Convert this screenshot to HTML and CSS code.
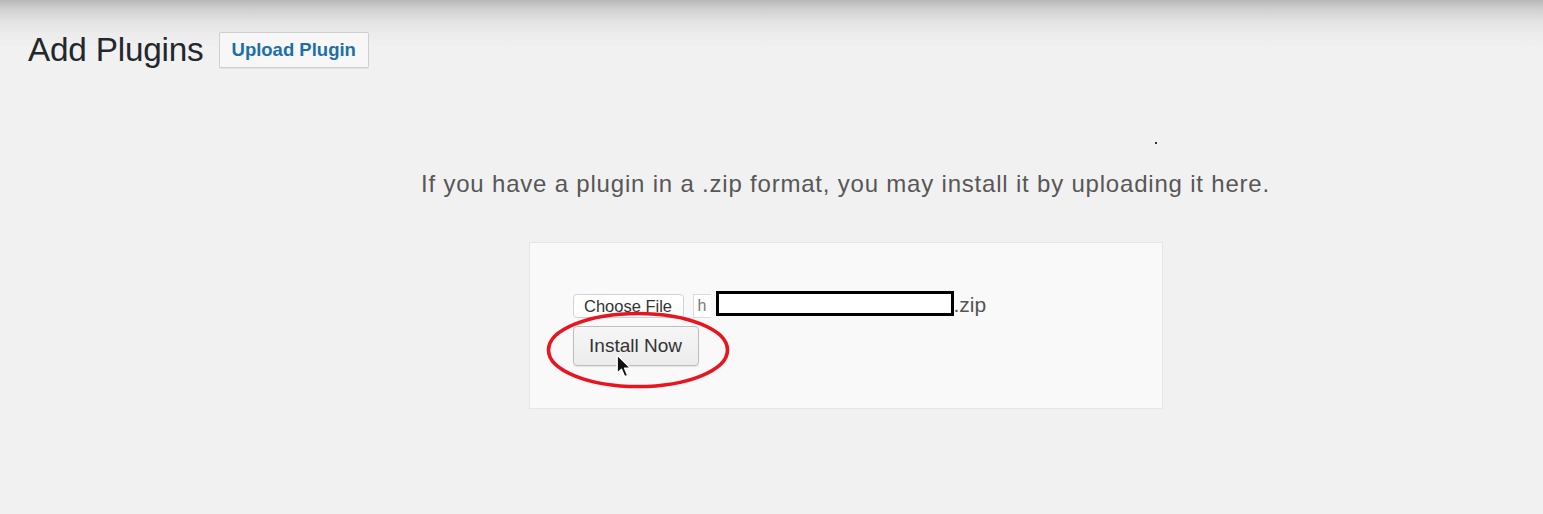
FILE: index.html
```html
<!DOCTYPE html>
<html lang="en">
<head>
<meta charset="utf-8">
<title>Add Plugins</title>
<link rel="stylesheet" href="styles.css">
</head>
<body>
<div class="page">
  <header class="head">
    <h1 class="title">Add Plugins</h1>
    <button class="upload-btn">Upload Plugin</button>
  </header>
  <div class="upload-wrap">
    <p class="install-help">If you have a plugin in a .zip format, you may install it by uploading it here.</p>
    <div class="upload-box">
      <div class="file-row">
        <span class="choose-btn">Choose File</span>
        <span class="file-stub">h</span>
        <span class="redact"></span>
        <span class="ext">.zip</span>
      </div>
      <button class="install-btn">Install Now</button>
      <svg class="circle" width="186" height="80" viewBox="0 0 186 80"><ellipse cx="92" cy="39" rx="89.5" ry="36.5" fill="none" stroke="#e8141f" stroke-width="3.6"/></svg>
      <svg class="cursor" width="16" height="25" viewBox="0 0 14 22"><path d="M1 1 L1 17 L4.8 13.4 L7.6 20 L10.2 18.9 L7.5 12.5 L12.6 12.3 Z" fill="#111" stroke="#fff" stroke-width="1.2" stroke-linejoin="round"/></svg>
    </div>
  </div>
  <span class="speck"></span>
</div>
</body>
</html>
```
FILE: styles.css
```css
html, body {
  margin: 0;
  padding: 0;
}
body {
  background: #f1f1f1 linear-gradient(to bottom, #b8b8b8 0px, #d2d2d2 10px, #e3e3e3 22px, #ececec 34px, #f1f1f1 48px) no-repeat;
  background-size: 100% 60px;
  height: 514px;
  overflow: hidden;
  font-family: "Liberation Sans", Arial, Helvetica, sans-serif;
}
.page {
  position: relative;
  height: 514px;
}
.head {
  display: flex;
  align-items: center;
  gap: 15px;
  padding: 31px 0 0 28px;
}
.title {
  margin: 0;
  font-size: 33.3px;
  font-weight: 400;
  color: #23282d;
  letter-spacing: -0.2px;
}
.upload-btn {
  height: 36px;
  padding: 0 12px;
  background: #f7f7f7;
  border: 1px solid #cfcfcf;
  border-radius: 2px;
  font-family: "Liberation Sans", Arial, sans-serif;
  font-size: 18.5px;
  font-weight: 700;
  color: #1e6fa8;
  box-shadow: 0 1px 0 #e2e2e2;
}
.upload-wrap {
  display: flex;
  flex-direction: column;
  align-items: center;
  padding-left: 148px;
}
.install-help {
  margin: 100px 0 43px;
  font-size: 24px;
  line-height: 30px;
  letter-spacing: 0.8px;
  color: #575757;
}
.upload-box {
  position: relative;
  box-sizing: border-box;
  width: 634px;
  height: 167px;
  padding: 48px 0 0 43px;
  background: #f9f9f9;
  border: 1px solid #e6e6e6;
}
.file-row {
  display: flex;
  align-items: center;
  height: 25px;
}
.choose-btn {
  box-sizing: border-box;
  display: flex;
  align-items: center;
  justify-content: center;
  width: 111px;
  height: 24px;
  margin-top: 5px;
  background: #fff;
  border: 1px solid #d2d2d2;
  border-radius: 4px;
  font-size: 16.5px;
  color: #333;
}
.file-stub {
  box-sizing: border-box;
  width: 18px;
  height: 24px;
  margin: 5px 0 0 9px;
  padding-left: 4px;
  background: #fff;
  border: 1px solid #dcdcdc;
  border-right: none;
  font-size: 16px;
  line-height: 22px;
  color: #777;
  overflow: hidden;
}
.redact {
  box-sizing: border-box;
  width: 238px;
  height: 25px;
  margin-left: 5px;
  background: #fff;
  border: 3px solid #000;
}
.ext {
  margin-top: 2px;
  font-size: 21px;
  color: #555;
}
.install-btn {
  display: block;
  box-sizing: border-box;
  width: 126px;
  height: 40px;
  margin-top: 10px;
  padding: 0;
  background: linear-gradient(to bottom, #f6f6f6, #ececec);
  border: 1px solid #bdbdbd;
  border-radius: 4px;
  box-shadow: 0 1px 1px rgba(0,0,0,0.08);
  font-family: "Liberation Sans", Arial, sans-serif;
  font-size: 19px;
  color: #333;
}
.circle {
  position: absolute;
  left: 16px;
  top: 68px;
}
.cursor {
  position: absolute;
  left: 86px;
  top: 111px;
}
.speck {
  position: absolute;
  left: 1155px;
  top: 142px;
  width: 2px;
  height: 2px;
  background: #333;
}
```
